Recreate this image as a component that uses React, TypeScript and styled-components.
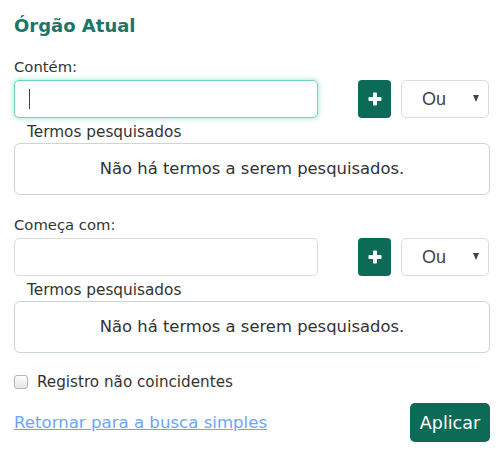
import React from "react";
import styled, { createGlobalStyle } from "styled-components";

const Global = createGlobalStyle`
  html, body { margin: 0; padding: 0; background: #fff; }
  body { font-family: "DejaVu Sans", "Noto Sans", sans-serif; color: #333; }
  * { box-sizing: border-box; }
`;

const Panel = styled.div`
  width: 502px;
  height: 456px;
  padding: 12px 12px 0 14px;
  display: flex;
  flex-direction: column;
`;

const Title = styled.h2`
  margin: 0;
  font-size: 18px;
  font-weight: 700;
  color: #1c7568;
  line-height: 28px;
  height: 28px;
`;

const FieldLabel = styled.div<{ $mt: number }>`
  margin-top: ${(p) => p.$mt}px;
  font-size: 14.8px;
  line-height: 22px;
  color: #333;
`;

const InputRow = styled.div`
  display: flex;
  align-items: stretch;
  margin-top: 2px;
  height: 38px;
`;

const TextInput = styled.div<{ $focus?: boolean }>`
  width: 304px;
  height: 38px;
  border-radius: 5px;
  border: 1px solid ${(p) => (p.$focus ? "#6fd6bc" : "#d8dcdb")};
  box-shadow: ${(p) =>
    p.$focus ? "0 0 4px 1px rgba(102, 217, 184, 0.55)" : "none"};
  background: #fff;
  display: flex;
  align-items: center;
  padding-left: 14px;
`;

const Caret = styled.span`
  width: 1px;
  height: 20px;
  background: #444;
`;

const PlusButton = styled.button`
  margin-left: 40px;
  width: 33px;
  height: 38px;
  border: none;
  border-radius: 4px;
  background: #0c6b56;
  display: flex;
  align-items: center;
  justify-content: center;
  padding: 0;
`;

const Select = styled.div`
  margin-left: 10px;
  width: 88px;
  height: 38px;
  border: 1px solid #dcdcdc;
  border-radius: 5px;
  background: #fff;
  display: flex;
  align-items: center;
  padding-left: 20px;
  padding-right: 9px;
  font-family: "Liberation Sans", Arial, sans-serif;
  font-size: 18px;
  color: #444;
`;

const SelectText = styled.span`
  flex: 1;
`;

const Arrow = styled.span`
  width: 0;
  height: 0;
  border-left: 3.5px solid transparent;
  border-right: 3.5px solid transparent;
  border-top: 7px solid #444;
  margin-top: -2px;
`;

const TermsLabel = styled.div`
  margin-top: 5px;
  padding-left: 13px;
  font-size: 15.3px;
  line-height: 19px;
  color: #333;
`;

const TermsBox = styled.div`
  margin-top: 1px;
  width: 476px;
  height: 52px;
  border: 1px solid #ccd6d4;
  border-radius: 6px;
  display: flex;
  align-items: center;
  justify-content: center;
  font-size: 16.4px;
  color: #333;
  padding-bottom: 2px;
`;

const CheckRow = styled.label`
  margin-top: 19px;
  display: flex;
  align-items: center;
  gap: 9px;
  font-size: 15.2px;
  color: #333;
  line-height: 20px;
`;

const Check = styled.span`
  width: 14px;
  height: 14px;
  border: 1px solid #b5b5b5;
  border-radius: 3px;
  background: linear-gradient(#fdfdfd, #e6e6e6);
`;

const Footer = styled.div`
  margin-top: 11px;
  display: flex;
  align-items: center;
  justify-content: space-between;
  width: 476px;
`;

const Link = styled.a`
  font-size: 16.6px;
  color: #6aa6f8;
  text-decoration: underline;
  cursor: pointer;
`;

const ApplyButton = styled.button`
  width: 80px;
  height: 39px;
  border: none;
  border-radius: 5px;
  background: #0c6b56;
  color: #fff;
  font-family: "DejaVu Sans", "Noto Sans", sans-serif;
  font-size: 17.5px;
  padding: 0;
`;

const PlusIcon = () => (
  <svg width="14" height="14" viewBox="0 0 14 14">
    <rect x="5" y="0.5" width="4" height="13" rx="0.8" fill="#fff" />
    <rect x="0.5" y="5" width="13" height="4" rx="0.8" fill="#fff" />
  </svg>
);

const Section = ({
  label,
  mt,
  focus,
}: {
  label: string;
  mt: number;
  focus?: boolean;
}) => (
  <>
    <FieldLabel $mt={mt}>{label}</FieldLabel>
    <InputRow>
      <TextInput $focus={focus}>{focus && <Caret />}</TextInput>
      <PlusButton>
        <PlusIcon />
      </PlusButton>
      <Select>
        <SelectText>Ou</SelectText>
        <Arrow />
      </Select>
    </InputRow>
    <TermsLabel>Termos pesquisados</TermsLabel>
    <TermsBox>Não há termos a serem pesquisados.</TermsBox>
  </>
);

export default function App() {
  return (
    <>
      <Global />
      <Panel>
        <Title>Órgão Atual</Title>
        <Section label="Contém:" mt={16} focus />
        <Section label="Começa com:" mt={19} />
        <CheckRow>
          <Check />
          Registro não coincidentes
        </CheckRow>
        <Footer>
          <Link>Retornar para a busca simples</Link>
          <ApplyButton>Aplicar</ApplyButton>
        </Footer>
      </Panel>
    </>
  );
}
